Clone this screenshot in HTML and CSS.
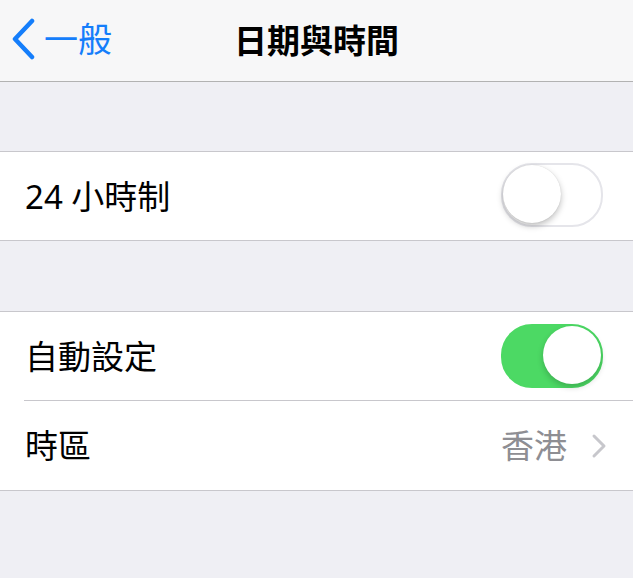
FILE: index.html
```html
<!DOCTYPE html>
<html>
<head>
    <title>日期與時間</title>
    <meta charset="UTF-8">
    <meta name="viewport" content="width=device-width, initial-scale=1.0">
    <link rel="stylesheet" href="styles.css">
</head>
<body>
    <div class="navbar">
        <a class="back" href="#">
            <svg class="back-icon" width="26" height="42" viewBox="0 0 26 42">
                <path d="M22 3 L5 21 L22 39" fill="none" stroke="#157efb" stroke-width="4.5" stroke-linecap="round" stroke-linejoin="round"/>
            </svg>
            <span>一般</span>
        </a>
        <h1 class="title">日期與時間</h1>
    </div>

    <div class="group">
        <div class="cell">
            <span class="label">24 小時制</span>
            <div class="switch"><div class="knob"></div></div>
        </div>
    </div>

    <div class="group second">
        <div class="cell">
            <span class="label">自動設定</span>
            <div class="switch on"><div class="knob"></div></div>
        </div>
        <div class="cell">
            <span class="label">時區</span>
            <span class="detail">香港</span>
            <svg class="chevron" width="16" height="26" viewBox="0 0 16 26">
                <path d="M3 3 L13 13 L3 23" fill="none" stroke="#c7c7cc" stroke-width="3" stroke-linecap="round" stroke-linejoin="round"/>
            </svg>
        </div>
    </div>
</body>
</html>
```

FILE: styles.css
```css
body {
    margin: 0;
    background-color: #efeff4;
    font-family: "Noto Sans", "Noto Sans CJK TC", sans-serif;
    color: #000;
}
.navbar {
    height: 81px;
    background-color: #f7f7f8;
    border-bottom: 1px solid #b2b2b2;
    position: relative;
    display: flex;
    align-items: center;
    justify-content: center;
}
.back {
    position: absolute;
    left: 10px;
    top: 17px;
    display: flex;
    align-items: center;
    text-decoration: none;
    color: #157efb;
    font-size: 34px;
}
.back span {
    margin-left: 8px;
    line-height: 44px;
}
.title {
    margin: 0;
    font-size: 33px;
    font-weight: bold;
    margin-top: -4px;
}
.group {
    margin-top: 69px;
    background-color: #fff;
    border-top: 1px solid #c8c7cc;
    border-bottom: 1px solid #c8c7cc;
}
.group.second {
    margin-top: 70px;
}
.cell {
    height: 88px;
    display: flex;
    align-items: center;
    padding: 0 25px 0 25px;
}
.cell + .cell {
    border-top: 1px solid #c8c7cc;
    margin-left: 24px;
    padding-left: 1px;
    height: 89px;
}
.label {
    flex: 1;
    font-size: 33px;
    margin-top: -3px;
}
.switch {
    width: 98px;
    height: 60px;
    border-radius: 31px;
    border: 2px solid #e5e5ea;
    background-color: #fff;
    position: relative;
    margin-right: 5px;
    margin-top: -2px;
}
.switch .knob {
    position: absolute;
    top: 0;
    left: 0;
    width: 58px;
    height: 58px;
    border-radius: 50%;
    background-color: #fff;
    box-shadow: 0 3px 6px rgba(0, 0, 0, 0.25), 0 0 1px rgba(0, 0, 0, 0.15);
}
.switch.on {
    background-color: #4cd964;
    border-color: #4cd964;
    margin-top: 0;
}
.switch.on .knob {
    left: auto;
    right: 0;
    box-shadow: 0 3px 6px rgba(0, 0, 0, 0.2);
}
.detail {
    color: #8e8e93;
    font-size: 33px;
    margin-right: 24px;
    margin-top: -3px;
}
.chevron {
    margin-right: 1px;
}
```
